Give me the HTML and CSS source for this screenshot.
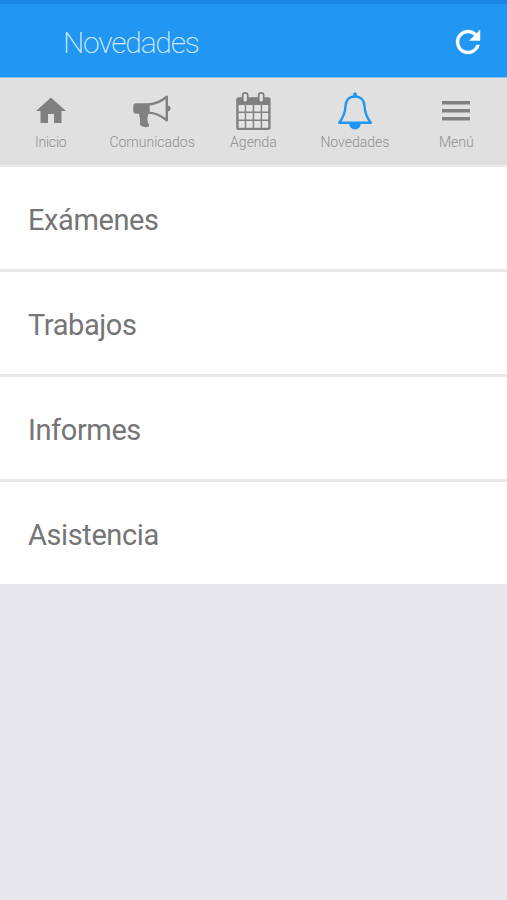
FILE: index.html
```html
<!DOCTYPE html>
<html lang="es">
  <head>
    <meta charset="UTF-8" />
    <meta name="viewport" content="width=device-width, initial-scale=1.0" />
    <title>Novedades</title>
    <link rel="stylesheet" href="styles.css">
  </head>
  <body>
  <header class="header">
    <h1>Novedades</h1>
    <button type="button" class="refresh-btn" aria-label="Actualizar">
      <svg viewBox="0 0 24 24" width="36" height="36"><path d="M17.65 6.35A7.96 7.96 0 0 0 12 4a8 8 0 1 0 7.73 10h-2.08A6 6 0 1 1 12 6c1.66 0 3.14.69 4.22 1.78L13 11h7V4z"/></svg>
    </button>
  </header>

  <nav class="tabs">
    <a class="tab">
      <svg viewBox="0 0 24 24" width="36" height="36"><path d="M10 20v-6h4v6h5v-8h3L12 3 2 12h3v8z"/></svg>
      <span class="spaced">Inicio</span>
    </a>
    <a class="tab">
      <svg viewBox="0 0 40 40" width="40" height="40">
        <path d="M17 12.3H4Q1.3 12.3 1.3 15v5q0 2.8 2.8 2.8H7q1.5 6 1 11.3 4 3.4 9 1.4v-2q-3-4-.5-10.7z"/>
        <path class="line" d="M16.5 13.5Q26 13 34.8 5.8V29.3Q26 22 16.5 21.6z"/>
        <path d="M35 14.5q3.5 0 3.5 3t-3.5 3z"/>
      </svg>
      <span>Comunicados</span>
    </a>
    <a class="tab">
      <svg viewBox="0 0 40 40" width="40" height="40">
        <rect x="3.2" y="6.3" width="34.4" height="32.7" rx="2.5"/>
        <rect class="ring" x="9.7" y="1.8" width="5" height="9.7" rx="2.5"/>
        <rect class="ring" x="25.7" y="1.8" width="5" height="9.7" rx="2.5"/>
        <path class="cells" d="M5.6 14h6.2v6.5H5.6zM13.2 14h6.5v6.5h-6.5zM21.2 14h6.5v6.5h-6.5zM29.1 14h6.2v6.5h-6.2zM5.6 22h6.2v6.5H5.6zM13.2 22h6.5v6.5h-6.5zM21.2 22h6.5v6.5h-6.5zM29.1 22h6.2v6.5h-6.2zM5.6 30h6.2v6.8H5.6zM13.2 30h6.5v6.8h-6.5zM21.2 30h6.5v6.8h-6.5zM29.1 30h6.2v6.8h-6.2z"/>
      </svg>
      <span>Agenda</span>
    </a>
    <a class="tab active">
      <svg viewBox="0 0 40 40" width="40" height="40">
        <path class="line" d="M20 5.5C14 5.5 10.800 9.5 10.5 15 10.2 23 8 27 4.2 31.8H35.8C32 27 29.8 23 29.5 15 29.2 9.5 26 5.5 20 5.5z"/>
        <rect x="18.2" y="1.3" width="3.6" height="5" rx="1.8"/>
        <path d="M14.2 32.5h11.6a5.8 6 0 0 1-11.6 0z"/>
      </svg>
      <span>Novedades</span>
    </a>
    <a class="tab">
      <svg viewBox="0 0 40 40" width="40" height="40"><path d="M6 10h28v3.4H6zM6 18h28v3.4H6zM6 26h28v3.4H6z"/></svg>
      <span>Menú</span>
    </a>
  </nav>

  <ul class="list">
    <li>Exámenes</li>
    <li>Trabajos</li>
    <li>Informes</li>
    <li>Asistencia</li>
  </ul>
  </body>
</html>
```
FILE: styles.css
```css
* {
  margin: 0;
  padding: 0;
  box-sizing: border-box;
  font-family: Roboto, sans-serif;
}

body {
  background-color: #e8e7ed;
  min-height: 100vh;
}

.header {
  display: flex;
  align-items: center;
  justify-content: space-between;
  height: 78px;
  padding: 3px 21px 0 63px;
  background: #2196f3;
  border-top: 4px solid #1e85e8;
  border-bottom: 1px solid #8cc4f0;
}

h1 {
  color: #d3ebff;
  font-size: 30px;
  font-weight: 200;
  letter-spacing: -1.2px;
}

.refresh-btn {
  display: flex;
  background: none;
  border: none;
  cursor: pointer;
}

.refresh-btn svg {
  fill: white;
  stroke: white;
  stroke-width: 0.3;
}

.tabs {
  display: grid;
  grid-template-columns: repeat(5, 1fr);
  height: 89px;
  padding-top: 12px;
  background: #e0e0e0;
  border-top: 1px solid #e8e4e0;
  border-bottom: 2px solid #ececee;
}

.tab {
  display: grid;
  grid-template-rows: 40px 21px;
  justify-items: center;
  align-items: center;
  align-content: start;
  color: #8f8f8f;
  font-size: 14px;
  font-weight: 300;
}

.spaced {
  letter-spacing: -0.2px;
}

.tab svg {
  fill: #808080;
}

.tab .line {
  fill: none;
  stroke: #808080;
  stroke-width: 2.4;
  stroke-linejoin: round;
}

.tab .ring {
  fill: #e4e4e4;
  stroke: #808080;
  stroke-width: 1.8;
}

.tab .cells {
  fill: #e4e4e4;
}

.tab.active svg {
  fill: #2196f3;
}

.tab.active .line {
  stroke: #2196f3;
}

.list {
  list-style: none;
  background: white;
}

.list li {
  display: flex;
  align-items: center;
  height: 105px;
  padding: 3px 28px 0;
  border-bottom: 3px solid #e9e9ec;
  color: #757575;
  font-size: 29px;
  letter-spacing: -0.4px;
}

.list li:last-child {
  height: 102px;
  border-bottom: none;
}
```
